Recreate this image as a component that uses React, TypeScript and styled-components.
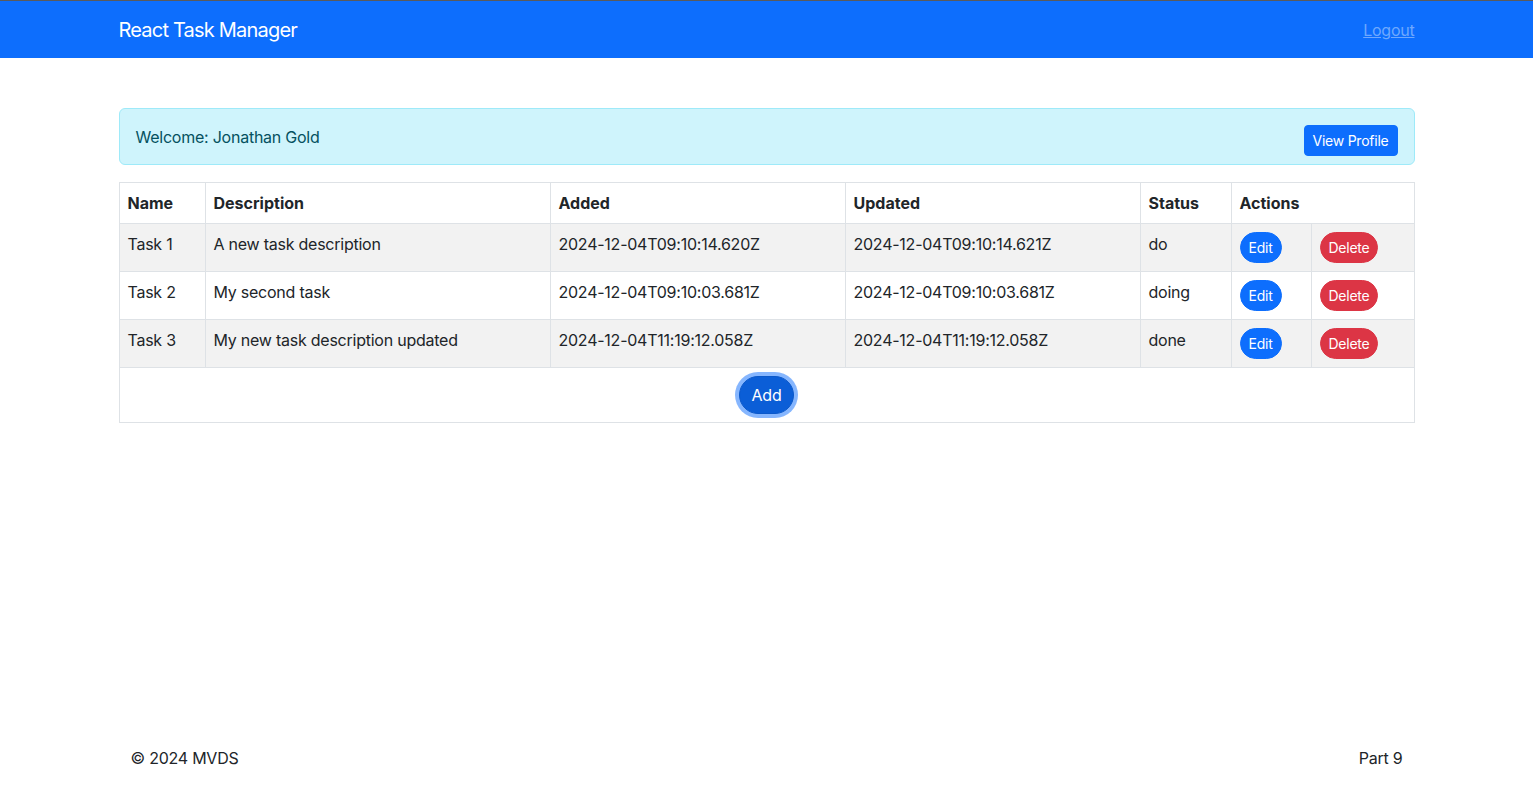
import React from 'react';
import styled, { createGlobalStyle } from 'styled-components';

interface Task {
  name: string;
  description: string;
  added: string;
  updated: string;
  status: string;
}

const tasks: Task[] = [
  {
    name: 'Task 1',
    description: 'A new task description',
    added: '2024-12-04T09:10:14.620Z',
    updated: '2024-12-04T09:10:14.621Z',
    status: 'do',
  },
  {
    name: 'Task 2',
    description: 'My second task',
    added: '2024-12-04T09:10:03.681Z',
    updated: '2024-12-04T09:10:03.681Z',
    status: 'doing',
  },
  {
    name: 'Task 3',
    description: 'My new task description updated',
    added: '2024-12-04T11:19:12.058Z',
    updated: '2024-12-04T11:19:12.058Z',
    status: 'done',
  },
];

const App: React.FC = () => (
  <Page>
    <GlobalStyle />
    <NavBar>
      <Container>
        <NavRow>
          <Brand>React Task Manager</Brand>
          <LogoutLink href="#">Logout</LogoutLink>
        </NavRow>
      </Container>
    </NavBar>

    <Main>
      <Container>
        <Alert>
          <span>Welcome: Jonathan Gold</span>
          <SmallButton>View Profile</SmallButton>
        </Alert>

        <Table>
          <colgroup>
            <Col width={86} />
            <Col width={345} />
            <Col width={295} />
            <Col width={295} />
            <Col width={91} />
            <Col width={80} />
            <Col width={103} />
          </colgroup>
          <thead>
            <tr>
              <Th>Name</Th>
              <Th>Description</Th>
              <Th>Added</Th>
              <Th>Updated</Th>
              <Th>Status</Th>
              <Th colSpan={2}>Actions</Th>
            </tr>
          </thead>
          <tbody>
            {tasks.map((task) => (
              <StripedRow key={task.name}>
                <Td>{task.name}</Td>
                <Td>{task.description}</Td>
                <Td>{task.added}</Td>
                <Td>{task.updated}</Td>
                <Td>{task.status}</Td>
                <Td>
                  <PillButton variant="primary">Edit</PillButton>
                </Td>
                <Td>
                  <PillButton variant="danger">Delete</PillButton>
                </Td>
              </StripedRow>
            ))}
            <tr>
              <AddCell colSpan={7}>
                <AddButton>Add</AddButton>
              </AddCell>
            </tr>
          </tbody>
        </Table>
      </Container>
    </Main>

    <Footer>
      <Container>
        <FooterRow>
          <span>© 2024 MVDS</span>
          <span>Part 9</span>
        </FooterRow>
      </Container>
    </Footer>
  </Page>
);

const GlobalStyle = createGlobalStyle`
  * { box-sizing: border-box; }
  body {
    margin: 0;
    font-family: Inter, "Liberation Sans", sans-serif;
    font-size: 16px;
    line-height: 1.5;
    letter-spacing: -0.015em;
    color: #212529;
    background: #fff;
  }
`;

const Page = styled.div`
  min-height: 100vh;
  display: flex;
  flex-direction: column;
`;

const Container = styled.div`
  width: 1296px;
  margin: 0 auto;
`;

const NavBar = styled.nav`
  background: #0d6efd;
  border-top: 1px solid #5a5a5a;
  height: 58px;
  display: flex;
  align-items: center;
`;

const NavRow = styled.div`
  display: flex;
  justify-content: space-between;
  align-items: center;
`;

const Brand = styled.span`
  color: #fff;
  font-size: 20px;
  line-height: 30px;
  letter-spacing: -0.04em;
`;

const LogoutLink = styled.a`
  color: #6ea8fe;
  font-size: 16px;
  text-decoration: underline;
`;

const Main = styled.main`
  padding-top: 50px;
`;

const Alert = styled.div`
  display: flex;
  justify-content: space-between;
  align-items: flex-start;
  height: 57px;
  padding: 16px;
  background: #cff4fc;
  border: 1px solid #9eeaf9;
  border-radius: 6px;
  color: #055160;
  margin-bottom: 17px;
  line-height: 24px;
`;

const SmallButton = styled.button`
  font-family: inherit;
  font-size: 14px;
  line-height: 21px;
  letter-spacing: inherit;
  padding: 4px 8px;
  border: 1px solid #0d6efd;
  border-radius: 4px;
  background: #0d6efd;
  color: #fff;
  cursor: pointer;
`;

const Table = styled.table`
  width: 1295px;
  table-layout: fixed;
  border-collapse: collapse;
  border: 1px solid #dee2e6;
`;

const Col = styled.col<{ width: number }>`
  width: ${({ width }) => width}px;
`;

const Th = styled.th`
  text-align: left;
  font-weight: 700;
  letter-spacing: 0;
  padding: 8px;
  border: 1px solid #dee2e6;
  vertical-align: top;
`;

const StripedRow = styled.tr`
  &:nth-child(odd) td {
    background: #f2f2f2;
  }
`;

const Td = styled.td`
  padding: 8px;
  border: 1px solid #dee2e6;
  vertical-align: top;
  height: 48px;
`;

const PillButton = styled.button<{ variant: 'primary' | 'danger' }>`
  font-family: inherit;
  font-size: 14px;
  line-height: 21px;
  letter-spacing: inherit;
  padding: 4px 8px;
  border-radius: 50rem;
  border: 1px solid ${({ variant }) => (variant === 'danger' ? '#dc3545' : '#0d6efd')};
  background: ${({ variant }) => (variant === 'danger' ? '#dc3545' : '#0d6efd')};
  color: #fff;
  cursor: pointer;
`;

const AddCell = styled.td`
  text-align: center;
  padding: 8px;
  border: 1px solid #dee2e6;
`;

const AddButton = styled.button`
  font-family: inherit;
  font-size: 16px;
  line-height: 24px;
  letter-spacing: inherit;
  padding: 6px 12px;
  border-radius: 50rem;
  border: 1px solid #0a58ca;
  background: #0b5ed7;
  color: #fff;
  box-shadow: 0 0 0 4px rgba(13, 110, 253, 0.5);
  cursor: pointer;
`;

const Footer = styled.footer`
  margin-top: auto;
  padding: 16px 0;
`;

const FooterRow = styled.div`
  display: flex;
  justify-content: space-between;
  padding: 0 12px;
  line-height: 24px;
`;

export default App;
